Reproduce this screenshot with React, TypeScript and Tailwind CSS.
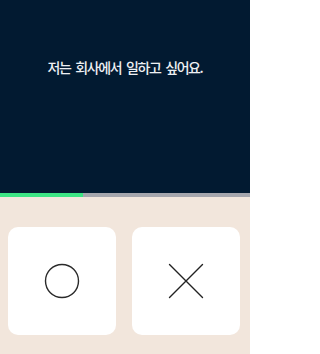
import React from 'react';

function Circle() {
  return (
    <svg width="36" height="36" viewBox="0 0 36 36" fill="none">
      <circle cx="18" cy="18" r="16.5" stroke="#2a2a2a" strokeWidth="1.4" />
    </svg>
  );
}

function Cross() {
  return (
    <svg width="36" height="36" viewBox="0 0 36 36" fill="none">
      <path d="M1.5 1.5L34.5 34.5M34.5 1.5L1.5 34.5" stroke="#222" strokeWidth="1.4" strokeLinecap="round" />
    </svg>
  );
}

export default function App() {
  const progress = 33.3;

  return (
    <div className="w-[250px] h-[354px] flex flex-col bg-[#f2e6dc] font-['Noto_Sans_CJK_KR','Noto_Sans',sans-serif]">
      <div className="h-[193px] bg-[#021a31] flex justify-center pt-[57px]">
        <p className="text-[14px] leading-[20px] font-medium tracking-[-1.4px] [word-spacing:3px] text-[#eef0f3]">저는 회사에서 일하고 싶어요.</p>
      </div>
      <div className="h-1 bg-[#a5a6ad]">
        <div className="h-full bg-[#3de584]" style={{ width: `${progress}%` }} />
      </div>
      <div className="grid grid-cols-2 gap-4 pl-2 pr-[10px] pt-[30px]">
        <button className="h-[108px] rounded-[10px] bg-white flex items-center justify-center">
          <Circle />
        </button>
        <button className="h-[108px] rounded-[10px] bg-white flex items-center justify-center">
          <Cross />
        </button>
      </div>
    </div>
  );
}
